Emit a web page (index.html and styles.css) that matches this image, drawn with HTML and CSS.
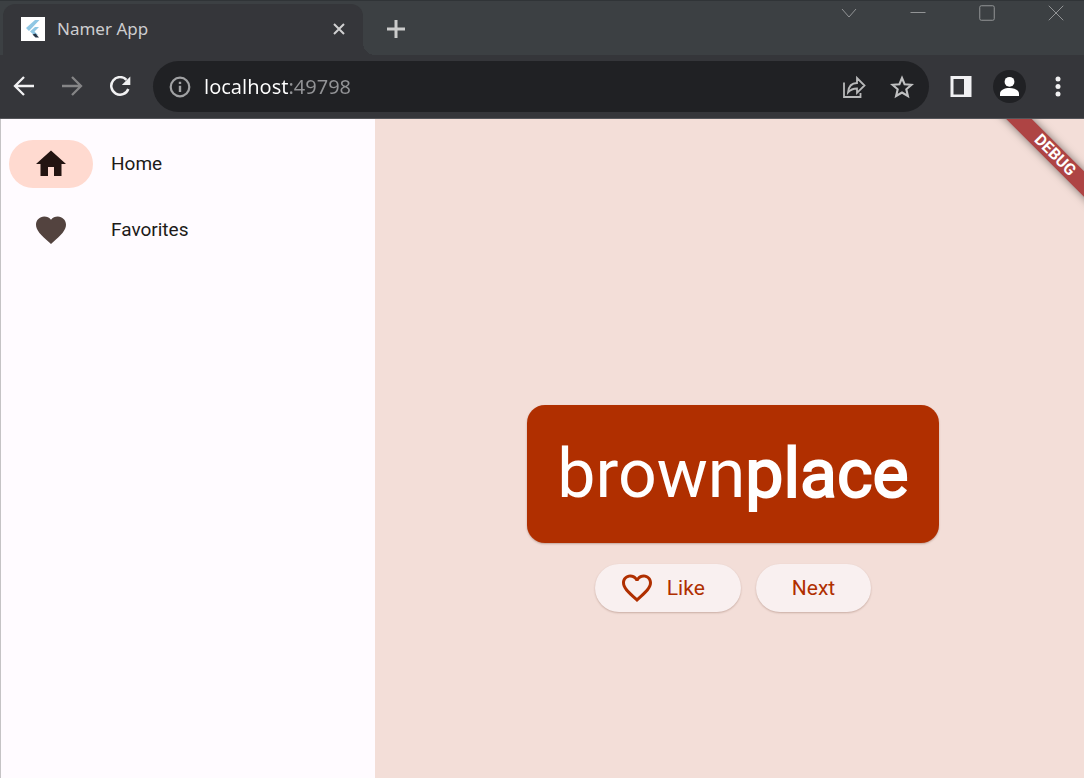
FILE: index.html
```html
<!DOCTYPE html>
<html lang="en">
<head>
<meta charset="utf-8">
<meta name="viewport" content="width=device-width, initial-scale=1">
<title>Namer App</title>
<link rel="stylesheet" href="styles.css">
</head>
<body>
<div class="window">
  <header class="chrome">
    <div class="tab-strip">
      <div class="tab">
        <svg class="favicon" viewBox="0 0 24 24" aria-hidden="true"><path fill="#fff" d="M0 0h24v24H0z"/><path fill="#8fc7e4" d="M14 3h4.500L8 14l-3-3zM14 10h4l-4.500 4.500L17 18h-4l-4-3.500z"/><path fill="#263445" d="M11.500 17.500l3-1 3.500 4h-3.500z"/></svg>
        <span class="tab-title">Namer App</span>
        <button class="icon-button tab-close" aria-label="Close tab"><svg width="12" height="12" viewBox="0 0 12 12"><path d="M1 1l10 10M11 1L1 11" stroke="#d0d0d1" stroke-width="2"/></svg></button>
      </div>
      <button class="icon-button new-tab" aria-label="New tab"><svg width="18" height="18" viewBox="0 0 18 18"><path d="M9 0v18M0 9h18" stroke="#cbcccc" stroke-width="3"/></svg></button>
      <div class="window-controls">
        <button class="icon-button" aria-label="Search tabs"><svg width="16" height="16" viewBox="0 0 16 16"><path d="M1 4l7 8 7-8"/></svg></button>
        <button class="icon-button" aria-label="Minimize"><svg width="16" height="16" viewBox="0 0 16 16"><path d="M.5 7.500h15"/></svg></button>
        <button class="icon-button" aria-label="Maximize"><svg width="16" height="16" viewBox="0 0 16 16"><rect x=".75" y=".75" width="14.500" height="14.500" rx="1.500"/></svg></button>
        <button class="icon-button" aria-label="Close window"><svg width="16" height="16" viewBox="0 0 16 16"><path d="M.75.75l14.500 14.500M15.250.75L.75 15.250"/></svg></button>
      </div>
    </div>
    <div class="toolbar">
      <div class="history">
        <button class="icon-button" aria-label="Back"><svg width="22" height="22" viewBox="0 0 22 22"><path d="M21 10H2.500M11 1l-9 9 9 9" fill="none" stroke="#f1f1f2" stroke-width="2.300"/></svg></button>
        <button class="icon-button" aria-label="Forward"><svg width="22" height="22" viewBox="0 0 22 22"><path d="M1 10h18.500M11 1l9 9-9 9" fill="none" stroke="#858586" stroke-width="2.300"/></svg></button>
        <button class="icon-button" aria-label="Reload"><svg width="22" height="22" viewBox="0 0 22 22"><path d="M17.500 3.900A8.800 8.800 0 1 0 19.300 13" fill="none" stroke="#f1f1f2" stroke-width="2.500"/><path fill="#f1f1f2" d="M21.300.5V9h-8.500z"/></svg></button>
      </div>
      <div class="omnibox">
        <svg width="22" height="22" viewBox="0 0 22 22" aria-hidden="true"><circle cx="11" cy="11" r="9.300" fill="none" stroke="#a0a1a3" stroke-width="2.200"/><path d="M11 9.700v6.300M11 5.700v2.300" stroke="#a0a1a3" stroke-width="2.400"/></svg>
        <input class="address" type="text" aria-label="Address" value="localhost:49798" spellcheck="false">
        <button class="icon-button" aria-label="Share"><svg width="24" height="24" viewBox="0 0 24 24"><path d="M2 7.500V22h16.500v-4M6 17.500c.5-5.500 3.500-9.500 9-9.500V3l7.500 7.500-7.500 7.300v-4.300c-4 0-6.500 1-9 4z" fill="none" stroke="#b8b9ba" stroke-width="1.800"/></svg></button>
        <button class="icon-button" aria-label="Bookmark this page"><svg width="24" height="24" viewBox="0 0 24 24"><path d="M12 3l2.600 6.200 6.900.6-5.200 4.500 1.600 6.700-5.900-3.500-5.900 3.500 1.600-6.700-5.200-4.500 6.900-.6z" fill="none" stroke="#c0c1c2" stroke-width="2.100"/></svg></button>
      </div>
      <div class="actions">
        <button class="icon-button" aria-label="Side panel"><svg width="22" height="22" viewBox="0 0 22 22"><path fill="#f1f1f3" fill-rule="evenodd" d="M.5 0h21v21H.5zM3.500 3v15.500H14V3z"/></svg></button>
        <button class="icon-button" aria-label="Profile"><svg width="33" height="33" viewBox="0 0 33 33"><circle cx="16.500" cy="16.500" r="16.500" fill="#202124"/><circle cx="16.500" cy="11.800" r="4.900" fill="#fff"/><path fill="#fff" d="M7 26v-2.300c0-7.500 19-7.500 19 0V26z"/></svg></button>
        <button class="icon-button" aria-label="Menu"><svg width="22" height="22" viewBox="0 0 22 22"><g fill="#f1f1f2"><circle cx="11" cy="3" r="2.500"/><circle cx="11" cy="10.500" r="2.500"/><circle cx="11" cy="18" r="2.500"/></g></svg></button>
      </div>
    </div>
  </header>
  <div class="app">
    <nav class="rail" aria-label="Main">
      <button class="destination selected" aria-current="page"><span class="indicator"><svg class="icon" viewBox="0 0 24 24"><path d="M10 20v-6h4v6h5v-8h3L12 3 2 12h3v8z"/></svg></span>Home</button>
      <button class="destination"><span class="indicator"><svg class="icon" viewBox="0 0 24 24"><path d="M12 21.350l-1.450-1.320C5.400 15.360 2 12.280 2 8.500 2 5.420 4.420 3 7.500 3c1.740 0 3.410.81 4.500 2.090C13.090 3.810 14.760 3 16.500 3 19.580 3 22 5.420 22 8.500c0 3.780-3.400 6.860-8.550 11.540z"/></svg></span>Favorites</button>
    </nav>
    <main class="generator">
      <h1 class="word-card">brown<span class="second">place</span></h1>
      <div class="button-row">
        <button class="pill like"><svg class="icon" viewBox="0 0 24 24" aria-hidden="true"><path d="M16.500 3c-1.740 0-3.410.81-4.500 2.090C10.910 3.810 9.240 3 7.500 3 4.420 3 2 5.420 2 8.500c0 3.780 3.400 6.860 8.550 11.540L12 21.350l1.450-1.320C18.600 15.360 22 12.280 22 8.500 22 5.420 19.580 3 16.500 3zm-4.400 15.550l-.1.1-.1-.1C7.140 14.240 4 11.390 4 8.500 4 6.500 5.500 5 7.500 5c1.540 0 3.040.99 3.570 2.360h1.870C13.460 5.990 14.960 5 16.500 5c2 0 3.500 1.500 3.500 3.500 0 2.890-3.140 5.740-7.900 10.050z"/></svg>Like</button>
        <button class="pill">Next</button>
      </div>
      <div class="debug-banner">DEBUG</div>
    </main>
  </div>
</div>
</body>
</html>
```

FILE: styles.css
```css
* {
  box-sizing: border-box;
}

body {
  margin: 0;
  font-family: Roboto, sans-serif;
}

button {
  border: 0;
  padding: 0;
  background: none;
  font: inherit;
  color: inherit;
  cursor: pointer;
}

svg {
  display: block;
  flex: none;
}

.window {
  display: flex;
  flex-direction: column;
  min-height: 100vh;
}

/* Browser frame */
.chrome {
  font-family: "Noto Sans", sans-serif;
  background: #35363a;
  border-bottom: 1px solid #55565a;
}

.icon-button {
  display: flex;
  align-items: center;
  justify-content: center;
  flex: none;
}

.tab-strip {
  display: flex;
  height: 55px;
  padding-left: 3px;
  background: #3c4043;
  border-top: 1px solid #303437;
}

.tab {
  position: relative;
  display: flex;
  align-items: center;
  width: 360px;
  margin-top: 3px;
  padding: 0 18px 2px;
  border-radius: 12px 12px 0 0;
  background: #35363a;
}

.tab::after {
  content: "";
  position: absolute;
  left: 100%;
  bottom: 0;
  width: 12px;
  height: 12px;
  background: radial-gradient(circle at 100% 0, transparent 12px, #35363a 12px);
}

.favicon {
  width: 24px;
  height: 24px;
}

.tab-title {
  flex: 1;
  margin-left: 12px;
  font-size: 17px;
  color: #cdcdcf;
}

.new-tab {
  width: 66px;
  padding-top: 2px;
}

.window-controls {
  display: flex;
  align-items: flex-start;
  gap: 53px;
  margin-left: auto;
  padding: 4px 20px 0 0;
}

.window-controls svg {
  fill: none;
  stroke: #929496;
  stroke-width: 1;
}

.toolbar {
  display: flex;
  align-items: center;
  height: 63px;
  padding: 0 15px 0 13px;
}

.history {
  display: flex;
  gap: 26px;
}

.omnibox {
  display: flex;
  align-items: center;
  flex: 1;
  min-width: 0;
  height: 51px;
  margin: 0 21px 0 22px;
  padding: 0 15px 0 16px;
  border-radius: 26px;
  background: #202124;
}

.address {
  flex: 1;
  min-width: 0;
  margin-left: 13px;
  padding: 0;
  border: 0;
  outline: 0;
  font: 20px "Noto Sans", sans-serif;
  color: transparent;
  caret-color: #fff;
  background: linear-gradient(90deg, #fff 84px, #929396 84px);
  background-clip: text;
  -webkit-background-clip: text;
}

.omnibox .icon-button + .icon-button {
  margin-left: 24px;
}

.actions {
  display: flex;
  align-items: center;
  gap: 21px;
}

/* App */
.app {
  display: flex;
  flex: 1;
}

.rail {
  display: flex;
  flex-direction: column;
  gap: 18px;
  width: 375px;
  padding: 21px 8px;
  border-left: 1px solid #c5c3c5;
  background: #fffbff;
}

.destination {
  display: flex;
  align-items: center;
  gap: 18px;
  font-size: 19px;
  line-height: 24px;
  color: #201a18;
}

.indicator {
  display: flex;
  align-items: center;
  justify-content: center;
  width: 84px;
  height: 48px;
  border-radius: 24px;
  color: #53433f;
}

.selected .indicator {
  background: #ffdad0;
  color: #231411;
}

.icon {
  width: 36px;
  height: 36px;
  fill: currentColor;
}

.generator {
  position: relative;
  display: flex;
  flex-direction: column;
  align-items: center;
  flex: 1;
  padding: 0 0 2px 7px;
  overflow: hidden;
  background: #f3ded8;
}

.generator::before {
  content: "";
  flex: 7;
}

.generator::after {
  content: "";
  flex: 4;
}

.word-card {
  margin: 0;
  padding: 30px;
  border-radius: 18px;
  background: #b02f00;
  box-shadow: 0 1px 2px rgba(80, 30, 10, 0.3);
  font-size: 68px;
  font-weight: 400;
  line-height: 78px;
  color: #fff;
}

.second {
  -webkit-text-stroke: 2px #fff;
}

.button-row {
  display: flex;
  gap: 15px;
  margin-top: 21px;
}

.pill {
  display: flex;
  align-items: center;
  gap: 12px;
  height: 48px;
  padding: 0 36px;
  border-radius: 24px;
  background: #f9f0f0;
  box-shadow: 0 1px 2px rgba(80, 30, 10, 0.25);
  font-size: 21px;
  color: #b02f00;
}

.like {
  padding-left: 24px;
}

.debug-banner {
  position: absolute;
  top: 27px;
  right: -51px;
  width: 160px;
  height: 18px;
  background: #ae4444;
  box-shadow: 0 0 9px rgba(0, 0, 0, 0.5);
  transform: rotate(45deg);
  font-size: 16px;
  font-weight: 700;
  line-height: 18px;
  text-align: center;
  color: #fff;
}
```
